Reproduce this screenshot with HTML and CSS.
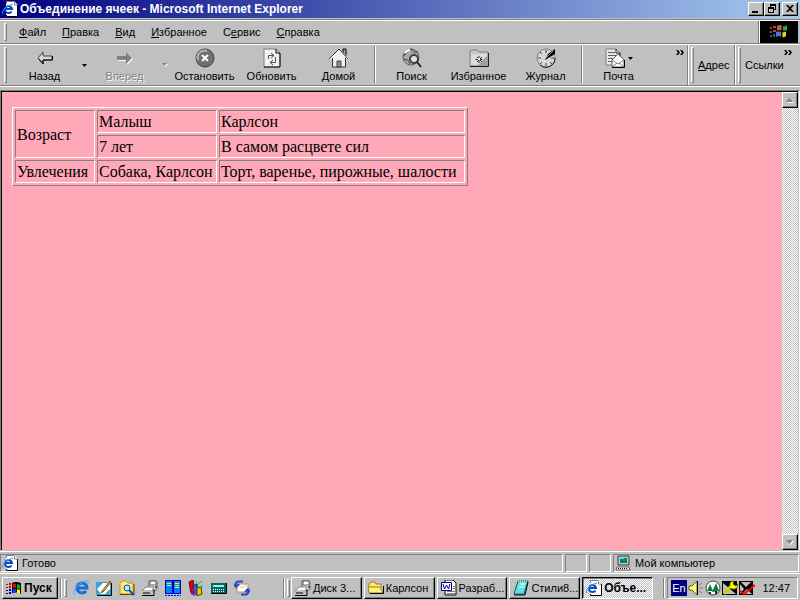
FILE: index.html
```html
<!DOCTYPE html>
<html lang="ru">
<head>
    <meta charset="UTF-8">
    <meta name="viewport" content="width=device-width, initial-scale=1.0">
    <title>Объединение ячеек - Microsoft Internet Explorer</title>
    <link rel="stylesheet" href="styles.css">
</head>
<body>
    <svg class="defs" aria-hidden="true">
        <symbol id="page-e" viewBox="0 0 16 16">
            <path d="M4 0h8l4 4v12H4z" fill="#fff"/>
            <path d="M4 .5h8M4.500 0v3M12.500 1v3h3" fill="none" stroke="#808080"/>
            <path d="M15.500 4v11.500H4.500V14" fill="none" stroke="#000"/>
            <path d="M9.500 10.500A3.500 3.500 0 1 1 10 8H4" fill="none" stroke="#0848c8" stroke-width="2"/>
            <path d="M1 13C-1 11 3 5 11 3" fill="none" stroke="#30a0f0"/>
        </symbol>
        <symbol id="drive" viewBox="0 0 16 16">
            <path d="M7 1h7l1 2v6l-3 2H7z" fill="#e0e0e0" stroke="#606060"/>
            <path d="M8 1h6v4H8z" fill="#fff" stroke="#606060"/>
            <path d="M13 6h2v2h-2z" fill="#008080"/>
            <path d="M0 11l4-4h8l-2 4z" fill="#fff" stroke="#808080"/>
            <path d="M0 11h11v4H0z" fill="#c0c0c0"/>
            <path d="M1 13h7M0 15.500h12v-6" fill="none" stroke="#000"/>
        </symbol>
    </svg>

    <header class="titlebar">
        <svg class="icon"><use href="#page-e"/></svg>
        <h1 class="title">Объединение ячеек - Microsoft Internet Explorer</h1>
        <div class="window-buttons">
            <button class="win-btn" aria-label="Свернуть"><svg width="12" height="10"><path d="M2 7h6v2H2z"/></svg></button>
            <button class="win-btn" aria-label="Восстановить"><svg width="12" height="10"><path d="M4 0h6v2H4zM4 2h1v1H4zM9 2h1v4H8V5h1zM2 3h6v2H2zM2 5h1v4H2zM7 5h1v4H7zM2 8h6v1H2z"/></svg></button>
            <button class="win-btn close" aria-label="Закрыть"><svg width="12" height="10"><path d="M2 1h2l2 2 2-2h2L7 4.500 10 8H8L6 6 4 8H2l3-3.500z"/></svg></button>
        </div>
    </header>

    <div class="chrome">
        <nav class="menubar">
            <span class="grip"></span>
            <button class="menu-item"><u>Ф</u>айл</button>
            <button class="menu-item"><u>П</u>равка</button>
            <button class="menu-item"><u>В</u>ид</button>
            <button class="menu-item"><u>И</u>збранное</button>
            <button class="menu-item">С<u>е</u>рвис</button>
            <button class="menu-item"><u>С</u>правка</button>
            <div class="brand">
                <svg width="20" height="18" viewBox="0 0 20 18">
                    <path d="M8 3q3-2 5 0v5q-2-2-5 0z" fill="#d05840"/>
                    <path d="M14 3q2 1 4-1v5q-2 2-4 1z" fill="#38a048"/>
                    <path d="M7 9q3-2 5 0v5q-2-2-5 0z" fill="#4878d0"/>
                    <path d="M13 9q2 1 4-1v5q-2 2-4 1z" fill="#f0d020"/>
                    <path d="M1 4h2v2H1zM4 3h3v2H4zM1 8h2v2H1zM4 7h3v2H4z" fill="#a04838"/>
                    <path d="M1 12h2v2H1zM4 11h2v3H4z" fill="#3858a0"/>
                    <path d="M13 2v13M7 8h10" stroke="#201010"/>
                </svg>
            </div>
        </nav>

        <div class="toolbar">
            <div class="band band-main">
                <span class="grip"></span>
                <button class="tool">
                    <svg class="tool-icon" viewBox="0 0 20 20"><path d="M3 10l5-6v4h9v4H8v4z" fill="#d8d8d8" stroke="#404040"/><path d="M4 11l4 5v-4h9.500V8" fill="none" stroke="#000"/></svg>
                    <span>Назад</span>
                </button>
                <button class="drop" aria-label="Назад, список"><svg width="5" height="3"><path d="M0 0h5L2.500 3z"/></svg></button>
                <button class="tool" disabled>
                    <svg class="tool-icon" viewBox="0 0 20 20"><path d="M3 9h9V5l6 6-6 6v-4H3z" fill="#fff"/><path d="M2 8h9V4l6 6-6 6v-4H2z" fill="#808080"/></svg>
                    <span>Вперед</span>
                </button>
                <button class="drop" disabled aria-label="Вперед, список"><svg width="6" height="4"><path d="M1 1h5L3.500 4z" fill="#fff"/><path d="M0 0h5L2.500 3z" fill="#808080"/></svg></button>
                <button class="tool">
                    <svg class="tool-icon" viewBox="0 0 20 20"><circle cx="10" cy="10" r="9" fill="#707070" stroke="#404040"/><path d="M3 12A7 7 0 0 1 12 3" fill="none" stroke="#b8b8b8" stroke-width="2"/><path d="M7 7l6 6M13 7l-6 6" stroke="#fff" stroke-width="2"/></svg>
                    <span>Остановить</span>
                </button>
                <button class="tool">
                    <svg class="tool-icon" viewBox="0 0 20 20"><path d="M2 1h12l4 4v14H2z" fill="#f0f0f0" stroke="#808080"/><path d="M14 1v4h4v14H2" fill="none" stroke="#000"/><path d="M6.500 11V7.500H12M9 5l3 2.500L9 10M13.500 9v5.500H9M11 12l-3 2.500 3 2.500" fill="none" stroke="#505050"/></svg>
                    <span>Обновить</span>
                </button>
                <button class="tool">
                    <svg class="tool-icon" viewBox="0 0 20 20"><path d="M14 7V1h3v9" fill="#a0a0a0" stroke="#000"/><path d="M4 9l6-6 7 7v9H4z" fill="#f0f0f0"/><path d="M3.500 10v9h13v-9" fill="none" stroke="#303030"/><path d="M1 11l9-9 9 9" fill="none" stroke="#fff" stroke-width="2"/><path d="M0 11l10-10 9 10" fill="none" stroke="#303030"/><path d="M8 13h4v6H8z" fill="#909090" stroke="#404040"/></svg>
                    <span>Домой</span>
                </button>
                <span class="sep"></span>
                <button class="tool">
                    <svg class="tool-icon" viewBox="0 0 20 20"><circle cx="9" cy="9" r="8" fill="#a8a8a8" stroke="#606060"/><path d="M1 8q4-2 5-5l4-2M10 1q0 4 6 3M2 12q4-2 6 4" fill="none" stroke="#404040"/><path d="M3 5q2-3 5-3" stroke="#fff" fill="none" stroke-width="2"/><circle cx="12" cy="11" r="4" fill="#e0e0e0" stroke="#404040" stroke-width="2"/><path d="M15 14l4 5" stroke="#202020" stroke-width="2"/></svg>
                    <span>Поиск</span>
                </button>
                <button class="tool">
                    <svg class="tool-icon" viewBox="0 0 20 20"><path d="M1 18V3l2-1h5l2 2h9v14z" fill="#c8c8c8" stroke="#808080"/><path d="M2 6h16v11H2z" fill="#dcdcdc"/><path d="M8 18L18 8v10z" fill="#a0a0a0"/><path d="M19.500 5v13.500H1" fill="none" stroke="#202020"/><path d="M10 8v7M6.500 11.500h7M8 9l5 5M13 9l-5 5" stroke="#303030"/><path d="M9 10h2v2H9z" fill="#fff"/></svg>
                    <span>Избранное</span>
                </button>
                <button class="tool">
                    <svg class="tool-icon" viewBox="0 0 20 20"><circle cx="10" cy="10" r="9" fill="#d8d8d8" stroke="#808080"/><path d="M4 17A9 9 0 0 0 19 10" fill="none" stroke="#202020"/><path d="M10 2v3M10 15v3M2 10h3M15 10h3M4 4l2 2M4 16l2-2M14 14l2 2" stroke="#404040"/><path d="M9 12l3-6 7-5v5z" fill="#000"/><path d="M9 11l8-8" stroke="#909090"/></svg>
                    <span>Журнал</span>
                </button>
                <span class="sep"></span>
                <button class="tool">
                    <span class="tool-pair">
                        <svg class="tool-icon" viewBox="0 0 20 20"><path d="M1 1h10l4 4v12H1z" fill="#e8e8e8" stroke="#808080"/><path d="M3 4.500h7M3 7.500h9M3 10.500h5M3 13.500h4" stroke="#606060"/><path d="M11 1v4h4v4" fill="none" stroke="#202020"/><path d="M7 12l6-6 6 6v7H7z" fill="#fff" stroke="#606060"/><path d="M7 12l6 4 6-4M7 19l5-4M19 19l-5-4" fill="none" stroke="#808080"/><path d="M19.500 12v7.500H7" fill="none" stroke="#000"/></svg>
                        <svg width="5" height="3"><path d="M0 0h5L2.500 3z"/></svg>
                    </span>
                    <span>Почта</span>
                </button>
                <button class="more" aria-label="Еще"><svg width="9" height="5"><path d="M0 0h2l2 2.500L2 5H0l2-2.500zM4 0h2l2 2.500L6 5H4l2-2.500z"/></svg></button>
            </div>
            <div class="band band-address">
                <span class="grip"></span>
                <button class="band-label"><u>А</u>дрес</button>
            </div>
            <div class="band band-links">
                <span class="grip"></span>
                <button class="band-label">Ссылки</button>
                <button class="more" aria-label="Еще ссылки"><svg width="9" height="5"><path d="M0 0h2l2 2.500L2 5H0l2-2.500zM4 0h2l2 2.500L6 5H4l2-2.500z"/></svg></button>
            </div>
        </div>
    </div>

    <div class="viewport">
        <main class="document">
            <table class="data">
                <tr>
                    <td class="col-name" rowspan="2">Возраст</td>
                    <td class="col-small">Малыш</td>
                    <td class="col-wide">Карлсон</td>
                </tr>
                <tr>
                    <td>7 лет</td>
                    <td>В самом расцвете сил</td>
                </tr>
                <tr>
                    <td>Увлечения</td>
                    <td>Собака, Карлсон</td>
                    <td>Торт, варенье, пирожные, шалости</td>
                </tr>
            </table>
        </main>
        <div class="scrollbar">
            <button class="scroll-btn" aria-label="Вверх"><svg width="8" height="5"><path d="M1 5h7L4.500 1z" fill="#fff"/><path d="M0 4h7L3.500 0z" fill="#808080"/></svg></button>
            <button class="scroll-btn" aria-label="Вниз"><svg width="8" height="5"><path d="M1 1h7L4.500 5z" fill="#fff"/><path d="M0 0h7L3.500 4z" fill="#808080"/></svg></button>
        </div>
    </div>

    <div class="statusbar">
        <div class="pane pane-main"><svg class="icon"><use href="#page-e"/></svg><span>Готово</span></div>
        <div class="pane pane-small"></div>
        <div class="pane pane-small"></div>
        <div class="pane pane-zone">
            <svg class="icon" viewBox="0 0 16 16"><path d="M3 1h11v9H3z" fill="#c0c0c0" stroke="#404040"/><path d="M5 3h7v5H5z" fill="#008080"/><path d="M5 3h4v1H5z" fill="#00ffff"/><path d="M2 12h12l1 3H1z" fill="#fff" stroke="#606060"/><path d="M3 13.500h10" stroke="#000" stroke-dasharray="1 1"/></svg>
            <span>Мой компьютер</span>
        </div>
    </div>

    <footer class="taskbar">
        <button class="start">
            <svg width="18" height="16" viewBox="0 0 18 16">
                <path d="M7 3q3-2 9 0v11q-5-3-9-1z" fill="#000"/>
                <path d="M8 4q2-1 3 0v4q-1-1-3 0z" fill="#f00"/><path d="M12 4l3 1v4l-3-1z" fill="#00c000"/>
                <path d="M8 9q2-1 3 0v4q-1-1-3 0z" fill="#0040ff"/><path d="M12 9l3 1v4l-3-1z" fill="#ff0"/>
                <path d="M1 4h2v1H1zM4 3h2v2H4zM1 7h2v1H1zM4 6h2v2H4z" fill="#d00000"/>
                <path d="M1 10h2v1H1zM4 9h2v2H4zM1 13h2v1H1zM4 12h2v2H4z" fill="#0000c0"/>
            </svg>
            <span>Пуск</span>
        </button>
        <span class="divider"></span>
        <span class="grip"></span>
        <div class="quick-launch">
            <button class="quick" aria-label="Internet Explorer"><svg class="icon" viewBox="0 0 16 16"><path d="M13 11a5 5 0 1 1 1-3H5" fill="none" stroke="#1870d8" stroke-width="3"/><path d="M2 15C-2 12 6 2 13 1q4 0 1 4" fill="none" stroke="#48b0f8" stroke-width="1"/></svg></button>
            <button class="quick" aria-label="Рабочий стол"><svg class="icon" viewBox="0 0 16 16"><path d="M0 2h15v13H0z" fill="#40a0d0"/><path d="M15.500 3v12.500H1" stroke="#000" fill="none"/><path d="M1 9l6-6h7v6l-5 5H5z" fill="#fff"/><path d="M6 11l8-10 1 1-7 9-3 2z" fill="#f0c040" stroke="#805000"/></svg></button>
            <button class="quick" aria-label="Проводник"><svg class="icon" viewBox="0 0 16 16"><path d="M1 14V3l2-2h4l2 2h5v11z" fill="#ffe880" stroke="#c09020"/><path d="M15 4v10.500H1" fill="none" stroke="#604000"/><circle cx="8" cy="8" r="3" fill="#a0f0ff" stroke="#0050a0"/><path d="M10 10l5 5" stroke="#0050c0" stroke-width="2"/></svg></button>
            <button class="quick" aria-label="Диск"><svg class="icon"><use href="#drive"/></svg></button>
            <button class="quick" aria-label="Панели"><svg class="icon" viewBox="0 0 16 16"><path d="M0 0h16v14H0z" fill="#0000c0"/><path d="M1 1h6v12H1zM9 1h6v12H9z" fill="#0080ff"/><path d="M2 3.500h4M2 5.500h4M10 3.500h4M10 5.500h4M10 7.500h4" stroke="#ff0"/><path d="M0 15.500h16" stroke="#00f" stroke-dasharray="2 1"/></svg></button>
            <button class="quick" aria-label="Книги"><svg class="icon" viewBox="0 0 16 16"><path d="M1 2l4-2 2 12-4 1z" fill="#e00020" stroke="#600020"/><path d="M5 6l4-2 1 9-4 2z" fill="#0080c0" stroke="#003060"/><path d="M9 8l4-1 1 7-5 2z" fill="#e0d000" stroke="#404000"/><path d="M10 4l4-3M13 5l2 2M8 1v2" stroke="#00c040"/><path d="M3 13l4 2M5 10h3" stroke="#d000d0" stroke-width="2"/></svg></button>
            <button class="quick" aria-label="Калькулятор"><svg class="icon" viewBox="0 0 16 16"><path d="M0 3h15v10H0z" fill="#006868"/><path d="M2 5h11v2H2z" fill="#a0f0e0"/><path d="M2 9.500h11M2 11.500h11" stroke="#fff" stroke-dasharray="1 1"/><path d="M15.500 3v10.500H0" fill="none" stroke="#000"/></svg></button>
            <button class="quick" aria-label="Outlook Express"><svg class="icon" viewBox="0 0 16 16"><path d="M3 4h11v8H3z" fill="#fff" stroke="#c09060"/><path d="M3 4l5 4 6-4" fill="none" stroke="#e0c080"/><path d="M9 1.500H4Q1 2 2 6M0 4l2 3 3-3" fill="none" stroke="#2050c0" stroke-width="2"/><path d="M7 14.500h5q3-1 2-5M11 12l3-3 2 3" fill="none" stroke="#2050c0" stroke-width="2"/></svg></button>
        </div>
        <span class="divider"></span>
        <span class="grip"></span>
        <div class="tasks">
            <button class="task"><svg class="icon"><use href="#drive"/></svg><span>Диск 3...</span></button>
            <button class="task"><svg class="icon" viewBox="0 0 16 16"><path d="M1 13V4l2-2h4l1 2h5v3" fill="#ffe880" stroke="#a08000"/><path d="M1 13l-1-6h12l3 6z" fill="#fff080" stroke="#a08000"/><path d="M2 13.500h13.500V6" fill="none" stroke="#000"/></svg><span>Карлсон</span></button>
            <button class="task"><svg class="icon" viewBox="0 0 16 16"><path d="M4 0h8l3 3v12H4z" fill="#fff" stroke="#000"/><path d="M6 11.500h8M6 13.500h8M12 6.500h2M12 8.500h2" stroke="#808080"/><path d="M.5 2.500h10v8H.5z" fill="#fff" stroke="#000080"/><path d="M2 4l1.500 5 2-4 2 4L9 4" fill="none" stroke="#0000a0"/></svg><span>Разраб...</span></button>
            <button class="task"><svg class="icon" viewBox="0 0 16 16"><path d="M5 1h10l-4 13H1z" fill="#60e0e0" stroke="#006060"/><path d="M15 2l-3 13H1" fill="none" stroke="#000"/><path d="M7 4h5M6 7h5" stroke="#fff"/><path d="M5 1h10" stroke="#fff" stroke-dasharray="1 1"/></svg><span>Стили8...</span></button>
            <button class="task active"><svg class="icon"><use href="#page-e"/></svg><span>Объе...</span></button>
        </div>
        <span class="divider"></span>
        <div class="tray">
            <button class="lang">En</button>
            <svg class="icon" viewBox="0 0 16 16"><path d="M1 6h3l5-5v14l-5-5H1z" fill="#ff8" stroke="#606000"/><path d="M9.500 1v14" stroke="#000"/><path d="M11 5l3-2M11 8h4M11 11l3 2" stroke="#808080"/></svg>
            <svg class="icon" viewBox="0 0 16 16"><circle cx="8" cy="8" r="7" fill="#fff" stroke="#404040"/><path d="M2 11l3-7 3 7zM7 12l4-9 3 8z" fill="#008040"/><path d="M4 12h2v2H4zM10 11h2v3h-2z" fill="#004020"/></svg>
            <svg class="icon" viewBox="0 0 16 16"><path d="M0 1h15v14H0z" fill="#000"/><path d="M1 3l6 5-6 6zM8 9l6 5H3z" fill="#c0c0c0"/><path d="M2 14l7-8" stroke="#d0d000" stroke-width="3"/><path d="M8 6q-1-5 4-5l-1 3 3 2 2-2q0 6-6 5" fill="#ff0" stroke="#606000"/></svg>
            <svg class="icon" viewBox="0 0 16 16"><path d="M0 1h14v14H0z" fill="#000"/><path d="M2 2l5 5 5-5zM1 4l4 5-4 5zM8 9l5 5H3z" fill="#c0c0c0"/><path d="M0 10l5 4L16 5" fill="none" stroke="#f00" stroke-width="2"/></svg>
            <time class="clock">12:47</time>
        </div>
    </footer>
</body>
</html>
```

FILE: styles.css
```css
* {
    margin: 0;
    padding: 0;
    box-sizing: border-box;
}

body {
    display: flex;
    flex-direction: column;
    height: 100vh;
    overflow: hidden;
    background: #c0c0c0;
    color: #000;
    font: 11px/14px "Liberation Sans", Arial, sans-serif;
}

button {
    border: 0;
    background: none;
    color: inherit;
    font: inherit;
    white-space: nowrap;
}

svg {
    display: block;
    flex: none;
}

.defs {
    width: 0;
    height: 0;
    position: absolute;
}

.icon {
    width: 16px;
    height: 16px;
}

.grip {
    flex: none;
    width: 3px;
    border: 1px solid;
    border-color: #fff #808080 #808080 #fff;
}

/* title bar */
.titlebar {
    display: flex;
    align-items: center;
    gap: 2px;
    height: 18px;
    padding: 0 2px;
    background: linear-gradient(to right, #000080, #a6caf0);
    color: #fff;
}

.title {
    flex: 1;
    font-size: 12px;
    font-weight: bold;
    white-space: nowrap;
}

.window-buttons {
    display: flex;
}

.win-btn,
.scroll-btn {
    display: flex;
    align-items: center;
    justify-content: center;
    width: 16px;
    height: 14px;
    border: 1px solid;
    border-color: #fff #000 #000 #fff;
    background: #c0c0c0;
    box-shadow: inset -1px -1px #808080;
}

.close {
    margin-left: 2px;
}

/* menu and toolbars */
.chrome {
    margin-top: 1px;
    border-top: 1px solid #808080;
    border-bottom: 1px solid #fff;
}

.menubar {
    display: flex;
    height: 24px;
    border-top: 1px solid #fff;
    border-bottom: 1px solid #808080;
    padding: 0 2px 0 4px;
}

.menubar .grip {
    margin: 2px 4px 2px 0;
}

.menu-item {
    padding: 0 8px;
}

.brand {
    display: flex;
    align-items: center;
    justify-content: center;
    width: 40px;
    margin-left: auto;
    border-left: 1px solid #808080;
    box-shadow: inset 1px 0 #fff;
    background: #000;
}

.toolbar {
    display: flex;
    height: 42px;
    border-top: 1px solid #fff;
    border-bottom: 1px solid #808080;
    padding-right: 2px;
}

.band {
    display: flex;
    padding-left: 2px;
    border-left: 1px solid #fff;
}

.band .grip {
    margin: 2px 0;
}

.band-main {
    flex: 1;
    padding-left: 4px;
    border-left: 0;
}

.band-main .grip {
    margin-right: 4px;
}

.band + .band {
    box-shadow: -1px 0 #808080;
    margin-left: 1px;
}

.tool {
    display: flex;
    flex-direction: column;
    align-items: center;
    gap: 1px;
    width: 67px;
    padding-top: 3px;
}

.tool-icon {
    width: 20px;
    height: 20px;
}

.tool-pair {
    display: flex;
    align-items: center;
    gap: 3px;
}

.tool:disabled {
    color: #808080;
    text-shadow: 1px 1px #fff;
}

.drop {
    display: flex;
    align-items: center;
    justify-content: center;
    width: 13px;
}

.sep {
    width: 2px;
    margin: 1px 2px 2px;
    border-left: 1px solid #808080;
    border-right: 1px solid #fff;
}

.more {
    align-self: flex-start;
    margin-left: auto;
    padding: 5px 2px;
}

.band-label {
    padding: 0 4px;
}

.band-address {
    width: 46px;
}

.band-links {
    width: 63px;
}

.band-links .more {
    margin-left: -6px;
}

/* page area */
.viewport {
    flex: 1;
    display: flex;
    min-height: 0;
    margin: 3px 0 1px;
    border-top: 1px solid #808080;
    border-left: 1px solid #808080;
    border-right: 1px solid #fff;
    padding-right: 1px;
}

.document {
    flex: 1;
    padding: 15px 10px;
    border-top: 1px solid #000;
    border-left: 1px solid #000;
    background: #ffa8b8;
}

.data {
    border: 1px solid;
    border-color: #fff #808080 #808080 #fff;
    border-spacing: 2px;
    font: 16px/19px "Liberation Serif", "Times New Roman", serif;
}

.data td {
    padding: 1px;
    border: 1px solid;
    border-color: #808080 #fff #fff #808080;
    white-space: nowrap;
}

.col-name {
    width: 80px;
}

.col-small {
    width: 120px;
}

.col-wide {
    width: 246px;
}

.scrollbar {
    display: flex;
    flex-direction: column;
    justify-content: space-between;
    width: 16px;
    border-top: 1px solid #000;
    background: repeating-conic-gradient(#fff 0 25%, #c0c0c0 0 50%) 0 0 / 2px 2px;
}

.scroll-btn {
    height: 16px;
}

/* status bar */
.statusbar {
    display: flex;
    gap: 2px;
    height: 22px;
    padding: 2px 1px 1px 0;
    border-top: 1px solid #fff;
}

.pane {
    display: flex;
    align-items: center;
    gap: 4px;
    padding: 0 1px;
    border: 1px solid;
    border-color: #808080 #fff #fff #808080;
}

.pane-main {
    flex: 1;
}

.pane-small {
    width: 22px;
}

.pane-zone {
    width: 186px;
}

/* taskbar */
.taskbar {
    display: flex;
    align-items: center;
    height: 27px;
    padding: 1px 2px 0;
    border-top: 1px solid #fff;
}

.start,
.task {
    display: flex;
    align-items: center;
    height: 22px;
    border: 1px solid;
    border-color: #fff #000 #000 #fff;
    box-shadow: inset -1px -1px #808080;
}

.start {
    width: 56px;
    gap: 1px;
    padding-left: 2px;
    font-size: 12px;
    font-weight: bold;
}

.divider {
    width: 2px;
    height: 20px;
    margin: 0 2px;
    border-left: 1px solid #808080;
    border-right: 1px solid #fff;
}

.taskbar .grip {
    height: 18px;
}

.quick-launch {
    display: flex;
    gap: 7px;
    width: 214px;
    padding-left: 6px;
}

.tasks {
    flex: 1;
    display: flex;
    gap: 2px;
    padding: 0 8px 0 1px;
}

.task {
    flex: 1;
    gap: 2px;
    min-width: 0;
    padding-left: 3px;
}

.active {
    border-color: #000 #fff #fff #000;
    background: repeating-conic-gradient(#fff 0 25%, #c0c0c0 0 50%) 0 0 / 2px 2px;
    box-shadow: inset 1px 1px #808080;
    font-size: 12px;
    font-weight: bold;
}

.tray {
    display: flex;
    align-items: center;
    gap: 1px;
    width: 131px;
    height: 22px;
    padding: 0 3px;
    border: 1px solid;
    border-color: #808080 #fff #fff #808080;
}

.lang {
    width: 16px;
    height: 16px;
    background: #000080;
    color: #fff;
}

.clock {
    margin-left: auto;
    padding-right: 4px;
}
```
